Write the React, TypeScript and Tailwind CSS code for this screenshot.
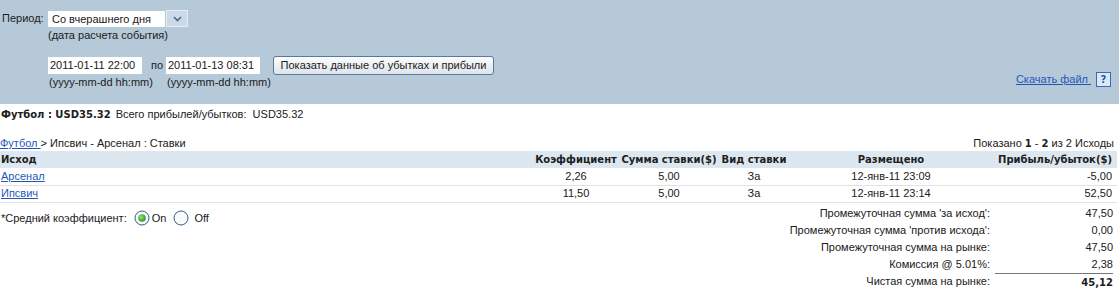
import React from "react";

const F = { fontFamily: '"Liberation Sans", Arial, sans-serif' };
const B = { fontFamily: '"DejaVu Sans", Verdana, sans-serif' };

function Radio({ checked }: { checked: boolean }) {
  return (
    <svg width="16" height="16" viewBox="0 0 16 16" className="shrink-0">
      <defs>
        <radialGradient id="rg" cx="0.4" cy="0.4" r="0.6">
          <stop offset="0" stopColor="#9be37f" />
          <stop offset="1" stopColor="#2f9a1e" />
        </radialGradient>
      </defs>
      <circle cx="8" cy="8" r="7" fill="#fafafa" stroke="#2f5f8f" strokeWidth="1" />
      {checked && <circle cx="8" cy="8" r="3.8" fill="url(#rg)" />}
    </svg>
  );
}

export default function App() {
  const rows = [
    { name: "Арсенал", k: "2,26", s: "5,00", v: "За", d: "12-янв-11 23:09", p: "-5,00" },
    { name: "Ипсвич", k: "11,50", s: "5,00", v: "За", d: "12-янв-11 23:14", p: "52,50" },
  ];
  const sums = [
    ["Промежуточная сумма 'за исход':", "47,50"],
    ["Промежуточная сумма 'против исхода':", "0,00"],
    ["Промежуточная сумма на рынке:", "47,50"],
    ["Комиссия @ 5.01%:", "2,38"],
  ];
  return (
    <div className="w-[1119px] h-[289px] bg-white text-[11px] leading-[13px] text-[#202020] overflow-hidden" style={F}>
      {/* top panel */}
      <div className="h-[104px] bg-[#b5c9d9] flex justify-between">
        <div className="pt-[10px] pl-[2px]">
          <div className="flex">
            <div className="w-[46px] pt-[2px]">Период:</div>
            <div className="flex flex-col">
              <div className="flex items-center">
                <div className="w-[117px] h-[16px] bg-white pl-[4px] leading-[16px]">Со вчерашнего дня</div>
                <div className="ml-[1px] w-[22px] h-[17px] bg-[#ccd9e8] border border-[#e4ecf5] flex items-center justify-center">
                  <svg width="9" height="6" viewBox="0 0 9 6">
                    <path d="M1 1 L4.5 4.5 L8 1" fill="none" stroke="#4c6a8c" strokeWidth="1.6" />
                  </svg>
                </div>
              </div>
              <div className="mt-[2px]">(дата расчета события)</div>
            </div>
          </div>
          <div className="flex mt-[15px] pl-[46px]">
            <div className="flex flex-col w-[94px]">
              <div className="w-[94px] h-[17px] bg-white pl-[2px] leading-[17px]">2011-01-11 22:00</div>
              <div className="mt-[2px] pl-[1px] whitespace-nowrap">(yyyy-mm-dd hh:mm)</div>
            </div>
            <div className="w-[24px] pl-[9px] leading-[17px]">по</div>
            <div className="flex flex-col w-[94px]">
              <div className="w-[94px] h-[17px] bg-white pl-[2px] leading-[17px]">2011-01-13 08:31</div>
              <div className="mt-[2px] pl-[1px] whitespace-nowrap">(yyyy-mm-dd hh:mm)</div>
            </div>
            <div className="ml-[13px] -mt-[1px] h-[19px] w-[221px] border border-[#5c7896] rounded-[3px] bg-gradient-to-b from-[#fbfcfd] to-[#dfe5ec] flex items-center justify-center">
              Показать данные об убытках и прибыли
            </div>
          </div>
        </div>
        <div className="self-end mb-[17px] mr-[8px] flex items-center">
          <a className="text-[#1f57b8] underline">Скачать файл&nbsp;</a>
          <div className="ml-[5px] w-[15px] h-[15px] border border-[#3a6bb8] bg-[#dde8f4] flex items-center justify-center text-[#1f57b8] font-bold text-[10px]" style={B}>
            ?
          </div>
        </div>
      </div>

      {/* summary line */}
      <div className="mt-[3px] pl-[1px] h-[14px] flex items-center">
        <span className="font-bold text-[10px]" style={B}>Футбол : USD35.32</span>
        <span className="ml-[5px]">Всего прибылей/убытков:&nbsp; USD35.32</span>
      </div>

      {/* breadcrumb */}
      <div className="mt-[16px] flex justify-between pr-[5px] h-[13px]">
        <div>
          <a className="text-[#1f57b8] underline">Футбол&nbsp;</a>
          <span>&gt; Ипсвич - Арсенал : Ставки</span>
        </div>
        <div>
          Показано <b className="text-[10px]" style={B}>1</b> - <b className="text-[10px]" style={B}>2</b> из 2 Исходы
        </div>
      </div>

      {/* table */}
      <table className="w-[1117px] border-collapse table-fixed mt-[1px]">
        <colgroup>
          <col className="w-[533px]" />
          <col className="w-[86px]" />
          <col className="w-[100px]" />
          <col className="w-[70px]" />
          <col className="w-[204px]" />
          <col className="w-[124px]" />
        </colgroup>
        <thead>
          <tr className="bg-[#dce7f0] h-[17px] font-bold text-[10px]" style={B}>
            <td className="text-left pl-[1px]">Исход</td>
            <td className="text-center whitespace-nowrap">Коэффициент</td>
            <td className="text-center whitespace-nowrap">Сумма ставки($)</td>
            <td className="text-center whitespace-nowrap">Вид ставки</td>
            <td className="text-center whitespace-nowrap">Размещено</td>
            <td className="text-right pr-[5px] whitespace-nowrap">Прибыль/убыток($)</td>
          </tr>
        </thead>
        <tbody>
          {rows.map((r) => (
            <tr key={r.name} className="h-[17px] border-b border-[#e2e2e2]">
              <td className="pl-[1px]">
                <a className="text-[#1f57b8] underline">{r.name}</a>
              </td>
              <td className="text-center">{r.k}</td>
              <td className="text-center">{r.s}</td>
              <td className="text-center">{r.v}</td>
              <td className="text-center">{r.d}</td>
              <td className="text-right pr-[5px]">{r.p}</td>
            </tr>
          ))}
        </tbody>
      </table>

      {/* bottom */}
      <div className="flex justify-between">
        <div className="flex items-center pl-[1px] mt-[7px] h-[17px] self-start">
          <span>*Средний коэффициент:</span>
          <span className="ml-[7px]"><Radio checked /></span>
          <span className="ml-[2px]">On</span>
          <span className="ml-[7px]"><Radio checked={false} /></span>
          <span className="ml-[5px]">Off</span>
        </div>
        <div className="flex flex-col pr-[6px] pt-[2px]">
          {sums.map(([l, v]) => (
            <div key={l} className="flex h-[17px] items-center">
              <div className="w-[250px] text-right">{l}</div>
              <div className="w-[118px] ml-[5px] text-right">{v}</div>
            </div>
          ))}
          <div className="flex h-[17px] items-center">
            <div className="w-[250px] text-right">Чистая сумма на рынке:</div>
            <div className="w-[118px] ml-[5px] text-right border-t border-[#777] h-[17px] leading-[17px] font-bold text-[10px]" style={B}>
              45,12
            </div>
          </div>
        </div>
      </div>
    </div>
  );
}
